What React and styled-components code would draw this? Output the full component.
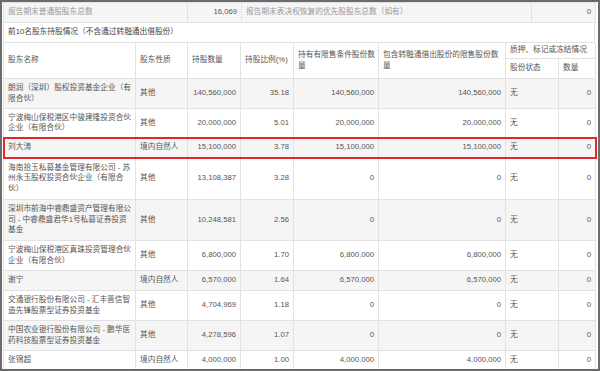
import React from 'react'
import styled, { createGlobalStyle } from 'styled-components'

const GlobalStyle = createGlobalStyle`
  html, body {
    margin: 0;
    padding: 0;
    background: #fff;
  }
`

const Frame = styled.div`
  width: 600px;
  height: 371px;
  box-sizing: border-box;
  border: 2px solid #6b6b6b;
  padding: 0 3px 0 1px;
  overflow: hidden;
  background: #fff;
  font-family: "Liberation Sans", "Noto Sans CJK SC", sans-serif;
  font-size: 7.7px;
  line-height: 10.5px;
  color: #555;
`

const Table = styled.table`
  width: 592px;
  border-collapse: separate;
  border-spacing: 0;
  table-layout: fixed;
  border-left: 1px solid #e2e2e2;
  border-top: ${p => (p.$top ? '1px solid #e2e2e2' : 'none')};
`

const Cell = styled.td`
  border-right: 1px solid #e2e2e2;
  border-bottom: 1px solid #e2e2e2;
  padding: 0 4px;
  vertical-align: middle;
  text-align: ${p => (p.$num ? 'right' : 'left')};
  white-space: pre;
  color: ${p => (p.$muted ? '#9a9a9a' : '#555')};
`

const HeadCell = styled.th`
  border-right: 1px solid #e2e2e2;
  border-bottom: 1px solid #e2e2e2;
  padding: 0 4px;
  vertical-align: middle;
  text-align: left;
  font-weight: normal;
  color: #555;
  white-space: nowrap;
`

const HeadRow = styled.tr`
  height: ${p => p.$h}px;
`

const SummaryRow = styled.tr`
  background: #f5f5f5;
  height: 20px;
`

const Title = styled.div`
  height: 20px;
  box-sizing: border-box;
  padding: 0 4px;
  display: flex;
  align-items: center;
  border-left: 1px solid #e2e2e2;
  border-right: 1px solid #e2e2e2;
  border-bottom: 1px solid #e2e2e2;
  color: #444;
`

const Row = styled.tr`
  height: ${p => p.$h}px;
  background: ${p => (p.$shade ? '#f5f5f5' : '#fff')};
  outline: ${p => (p.$mark ? '2px solid #e3262b' : 'none')};
  outline-offset: -1px;
`

const holders = [
  { h: 30, name: ['朗润（深圳）股权投资基金企业（有', '限合伙）'], kind: '其他', qty: '140,560,000', pct: '35.18', lim: '140,560,000', lent: '140,560,000' },
  { h: 29, name: ['宁波梅山保税港区中骏建隆投资合伙', '企业（有限合伙）'], kind: '其他', qty: '20,000,000', pct: '5.01', lim: '20,000,000', lent: '20,000,000' },
  { h: 20, name: ['刘大涛'], kind: '境内自然人', qty: '15,100,000', pct: '3.78', lim: '15,100,000', lent: '15,100,000', mark: true },
  { h: 42, name: ['海南拾玉私募基金管理有限公司 - 苏', '州永玉股权投资合伙企业（有限合', '伙）'], kind: '其他', qty: '13,108,387', pct: '3.28', lim: '0', lent: '0' },
  { h: 41, name: ['深圳市前海中睿鼎盛资产管理有限公', '司 - 中睿鼎盛君华1号私募证券投资', '基金'], kind: '其他', qty: '10,248,581', pct: '2.56', lim: '0', lent: '0' },
  { h: 30, name: ['宁波梅山保税港区真珠投资管理合伙', '企业（有限合伙）'], kind: '其他', qty: '6,800,000', pct: '1.70', lim: '6,800,000', lent: '6,800,000' },
  { h: 20, name: ['谢宁'], kind: '境内自然人', qty: '6,570,000', pct: '1.64', lim: '6,570,000', lent: '6,570,000' },
  { h: 30, name: ['交通银行股份有限公司 - 汇丰晋信智', '造先锋股票型证券投资基金'], kind: '其他', qty: '4,704,969', pct: '1.18', lim: '0', lent: '0' },
  { h: 30, name: ['中国农业银行股份有限公司 - 鹏华医', '药科技股票型证券投资基金'], kind: '其他', qty: '4,278,596', pct: '1.07', lim: '0', lent: '0' },
  { h: 19, name: ['张锦超'], kind: '境内自然人', qty: '4,000,000', pct: '1.00', lim: '4,000,000', lent: '4,000,000' },
]

export default function App() {
  return (
    <>
      <GlobalStyle />
      <Frame>
        <Table $top>
          <colgroup>
            <col style={{ width: 184 }} />
            <col style={{ width: 54 }} />
            <col style={{ width: 290 }} />
            <col style={{ width: 64 }} />
          </colgroup>
          <tbody>
            <SummaryRow>
              <Cell $muted>报告期末普通股股东总数</Cell>
              <Cell $num>16,069</Cell>
              <Cell $muted>报告期末表决权恢复的优先股股东总数（如有）</Cell>
              <Cell $num>0</Cell>
            </SummaryRow>
          </tbody>
        </Table>

        <Title>前10名股东持股情况（不含通过转融通出借股份）</Title>

        <Table>
          <colgroup>
            <col style={{ width: 132 }} />
            <col style={{ width: 52 }} />
            <col style={{ width: 53 }} />
            <col style={{ width: 53 }} />
            <col style={{ width: 85 }} />
            <col style={{ width: 127 }} />
            <col style={{ width: 53 }} />
            <col style={{ width: 37 }} />
          </colgroup>
          <thead>
            <HeadRow $h={16}>
              <HeadCell rowSpan={2}>股东名称</HeadCell>
              <HeadCell rowSpan={2}>股东性质</HeadCell>
              <HeadCell rowSpan={2}>持股数量</HeadCell>
              <HeadCell rowSpan={2}>持股比例(%)</HeadCell>
              <HeadCell rowSpan={2}>持有有限售条件股份数<br />量</HeadCell>
              <HeadCell rowSpan={2}>包含转融通借出股份的限售股份数<br />量</HeadCell>
              <HeadCell colSpan={2}>质押、标记或冻结情况</HeadCell>
            </HeadRow>
            <HeadRow $h={20}>
              <HeadCell>股份状态</HeadCell>
              <HeadCell>数量</HeadCell>
            </HeadRow>
          </thead>
          <tbody>
            {holders.map((h, i) => (
              <Row key={i} $h={h.h} $shade={i % 2 === 0} $mark={h.mark}>
                <Cell>
                  {h.name.map((line, j) => (
                    <div key={j}>{line}</div>
                  ))}
                </Cell>
                <Cell>{h.kind}</Cell>
                <Cell $num>{h.qty}</Cell>
                <Cell $num>{h.pct}</Cell>
                <Cell $num>{h.lim}</Cell>
                <Cell $num>{h.lent}</Cell>
                <Cell>无</Cell>
                <Cell $num>0</Cell>
              </Row>
            ))}
          </tbody>
        </Table>
      </Frame>
    </>
  )
}
